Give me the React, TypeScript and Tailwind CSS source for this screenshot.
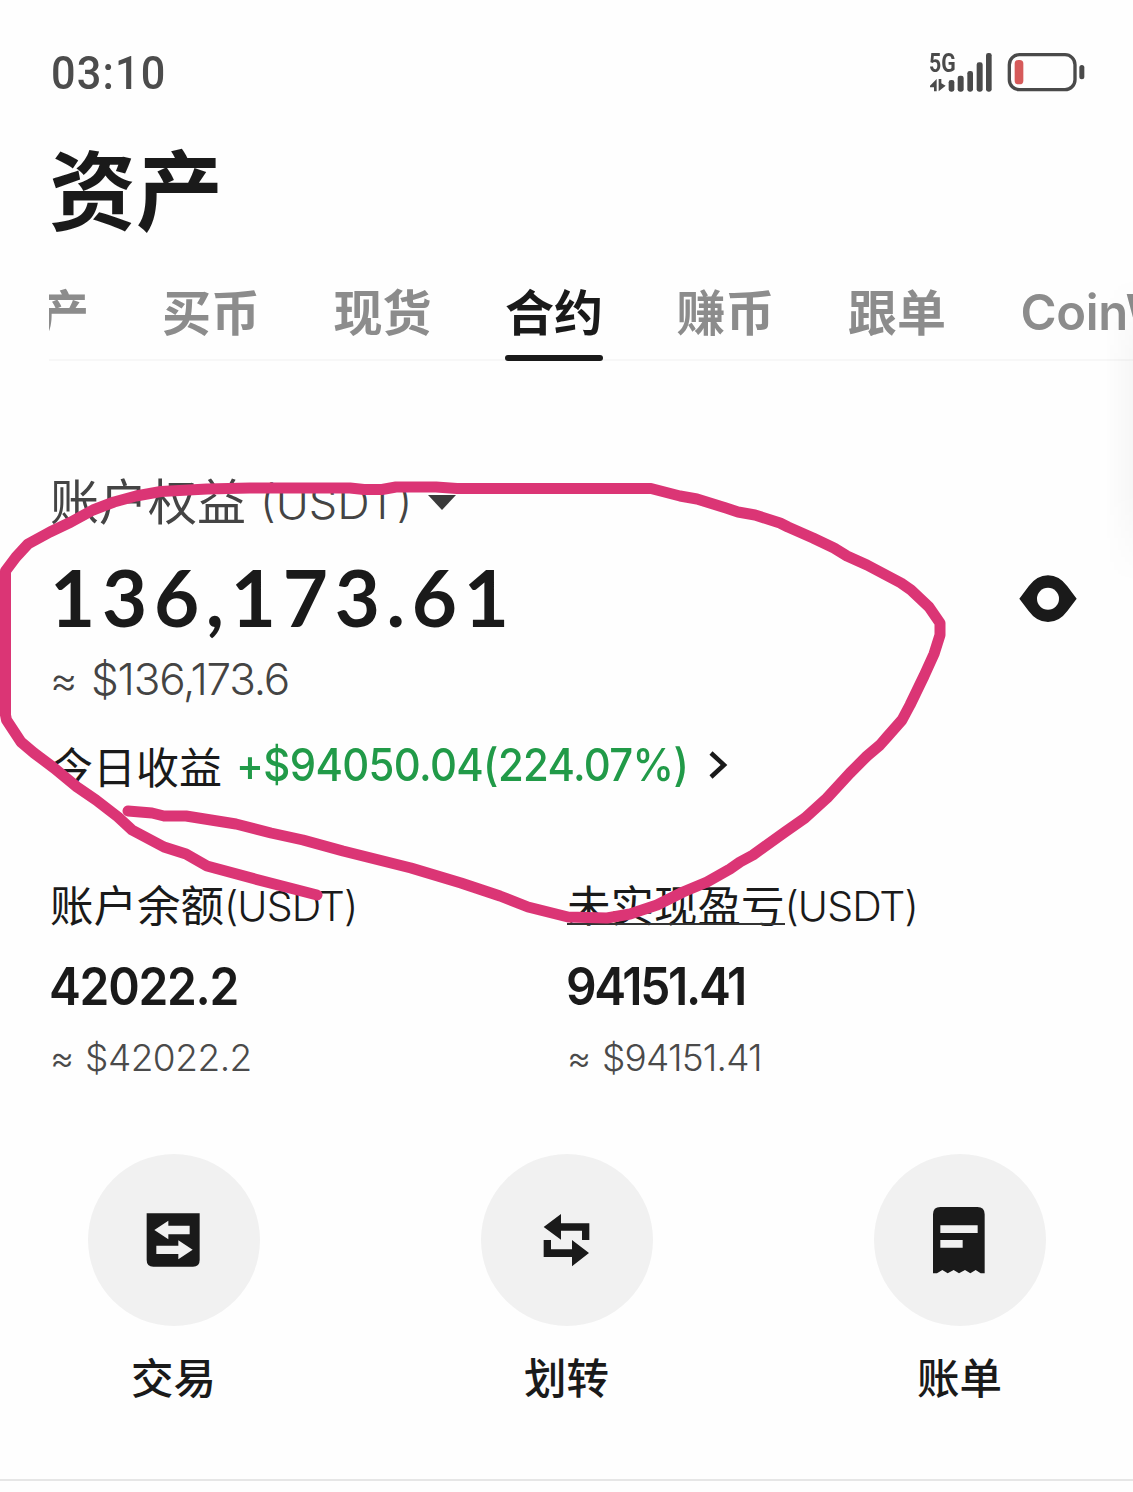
import React from 'react';

const UI = "font-['Inter','Noto_Sans_CJK_SC',sans-serif]";
const CJK = "font-['Noto_Sans_CJK_SC',sans-serif]";

const tabs = ['买币', '现货', '合约', '赚币', '跟单'];

function StatusBar() {
  return (
    <div className="flex h-[140px] items-start justify-between pl-[51px] pr-[48px] pt-[49px]">
      <span className="origin-left scale-x-[0.94] font-['Roboto',sans-serif] text-[46px] leading-[48px] font-medium tracking-[1.2px] text-[#4c4c4c]">
        03:10
      </span>
      <div className="flex items-start text-[#4a4a4a]">
        <div className="relative h-[44px] w-[64px]">
          <span className="absolute top-0 left-0 origin-left scale-x-[0.85] font-['Roboto',sans-serif] text-[25px] leading-[30px] font-bold">
            5G
          </span>
          <svg className="absolute top-0 left-0" width="64" height="44" viewBox="87 57 192 132" fill="currentColor">
            <path d="M90 167 L110 147 V184 H102 V172H90Z M116 147H124V160L137 167L116 184Z" />
            <rect x="146" y="150" width="17" height="35" rx="7" />
            <rect x="173" y="137" width="18" height="48" rx="7" />
            <rect x="202" y="123" width="17" height="62" rx="7" />
            <rect x="230" y="97" width="18" height="88" rx="7" />
            <rect x="258" y="69" width="17" height="116" rx="7" />
          </svg>
        </div>
        <svg className="ml-[14px]" width="78" height="44" viewBox="321 57 234 132">
          <rect x="328" y="74" width="197" height="105" rx="30" fill="none" stroke="#4a4a4a" strokeWidth="10" />
          <rect x="344" y="90" width="26" height="73" rx="11" fill="#d65a5a" />
          <rect x="538" y="105" width="15" height="43" rx="7.5" fill="#4a4a4a" />
        </svg>
      </div>
    </div>
  );
}

function Tabs() {
  return (
    <nav className={`${CJK} ml-[49px] flex h-[87px] overflow-hidden text-[49px] leading-[72px] font-bold whitespace-nowrap text-[#8c8c8c] shadow-[inset_0_-2px_0_#f7f7f7]`}>
      <span className="-ml-[9px] w-[122px] shrink-0">产</span>
      {tabs.map((t) => (
        <span
          key={t}
          className={
            t === '合约'
              ? 'relative mr-[73.5px] w-[98px] shrink-0 text-[#1a1a1a] after:absolute after:top-[81px] after:left-0 after:h-[6px] after:w-[98px] after:rounded-full after:bg-[#1a1a1a]'
              : 'mr-[73.5px] w-[98px] shrink-0'
          }
        >
          {t}
        </span>
      ))}
      <span className="ml-[1px] shrink-0 pt-[3px] font-['Inter',sans-serif] text-[49px] font-semibold tracking-[-0.3px]">CoinW</span>
    </nav>
  );
}

function Balance({ label, unit, value, valueClass, approx, approxClass, underlined = false }: {
  label: string; unit: string; value: string; valueClass: string; approx: string; approxClass: string; underlined?: boolean;
}) {
  return (
    <div className="w-[517px] shrink-0 text-[#1a1a1a]">
      <div className="flex h-[60px] items-center whitespace-nowrap">
        <span className={underlined
          ? `${CJK} relative -mt-[4px] text-[43.5px] leading-[60px] after:absolute after:bottom-[9px] after:left-0 after:h-[2px] after:w-full after:bg-[#333]`
          : `${CJK} -mt-[4px] text-[43.5px] leading-[60px]`}>
          {label}
        </span>
        <span className="font-['Inter',sans-serif] text-[41px] leading-[60px] font-light tracking-[-0.9px]">{unit}</span>
      </div>
      <div className={`-ml-[1px] mt-[20px] origin-left scale-x-[0.93] font-['Inter',sans-serif] text-[51.5px] leading-[60px] font-semibold ${valueClass}`}>{value}</div>
      <div className="mt-[10px] flex font-['Inter',sans-serif] text-[37px] leading-[64px] font-light text-[#4a4a4a]">
        <span className="w-[35px] text-[37px]">≈</span>
        <span className={approxClass}>{approx}</span>
      </div>
    </div>
  );
}

const actions = [
  {
    label: '交易',
    icon: (
      <svg width="172" height="172" viewBox="26 42 516 516">
        <path d="M202 220H361V360Q361 380 341 380H222Q202 380 202 360Z" fill="#1a1a1a" />
        <path d="M225 270L267 242V257H331V283H267V298Z M340 329L297 301V317H231V342H297V358Z" fill="#f1f1f1" />
      </svg>
    ),
  },
  {
    label: '划转',
    icon: (
      <svg width="172" height="172" viewBox="33 42 516 516" fill="#1a1a1a">
        <path d="M221 261L273 222V250H358V300H336V272H273V299Z" />
        <path d="M357 339L306 300V328H243V300H221V351H306V379Z" />
      </svg>
    ),
  },
  {
    label: '账单',
    icon: (
      <svg width="172" height="172" viewBox="43 42 516 516">
        <path d="M220 223Q220 201 242 201H353Q375 201 375 223V400H363L348 390L332 400L316 390L298 400L282 390L264 400L248 390L232 400H220Z" fill="#1a1a1a" />
        <path d="M242 256H354V279H242Z M242 300H309V323H242Z" fill="#f1f1f1" />
      </svg>
    ),
  },
];

const stroke =
  'M317 895L286 887L255 879L207 866L186 854L164 847L132 830L118 817L96 800L77 787L54 768L34 753L21 742L6.5 720L5.5 715V571L16 557L28 544L50 532L71 522L93 510L114 502L136 496L161 491.5L207 489L250 488H350L364 489.5H382L396 487H436L457 488.5H651L680 496L697 499L726 508L738 512L755 515L780 523L788 527L813 538L834 548L847 556L867 565L901 583L911 590L929 607L940 623V635L934 654L924 676L910 705L902 720L887 737L880 745L867 756L850 773L827 798L805 818L785 832L753 855L740 862L730 869L707 882L683 892L657 905L630 914L607 918L568 917L540 910L528 907L500 896L461 883L411 868L343 851L303 840L271 833L236 824L186 816H164L152 813L128 811';

export default function App() {
  return (
    <div className={`${UI} relative h-[1492px] w-[1133px] overflow-hidden bg-[#fefefe]`}>
      <StatusBar />
      <h1 className={`${CJK} ml-[49px] h-[134px] text-[87px] leading-[92px] font-bold text-[#1a1a1a]`}>资产</h1>
      <Tabs />

      <section className="h-[510px] pt-[112px] pl-[50px]">
        <div className="flex h-[60px] items-center whitespace-nowrap text-[#444]">
          <span className={`${CJK} -mt-[8px] text-[49px] leading-[60px]`}>账户权益</span>
          <span className="ml-[14px] font-['Inter',sans-serif] text-[45px] leading-[60px] font-light">(USDT)</span>
          <svg className="ml-[16px]" width="28" height="16" viewBox="0 0 28 16">
            <path d="M0 0H28L14 15Z" fill="#3a3a3a" />
          </svg>
        </div>
        <div className="mt-[21px] flex h-[90px] items-center justify-between pr-[56px]">
          <span className="-mt-[4px] font-['Lato',sans-serif] text-[78px] leading-[90px] font-bold tracking-[6.7px] text-[#1a1a1a]">136,173.61</span>
          <svg width="58" height="48" viewBox="57 46 174 144">
            <path d="M58 117L86 80Q110 47 144 47T202 80L230 117L202 154Q178 187 144 187T86 154Z" fill="#1a1a1a" />
            <circle cx="144" cy="117" r="33" fill="#fefefe" />
          </svg>
        </div>
        <div className="flex h-[70px] items-center font-['Inter',sans-serif] text-[44px] font-light text-[#444]">
          <span className="w-[41px] text-[42px]">≈</span>
          <span className="tracking-[-1.2px]">$136,173.6</span>
        </div>
        <div className="mt-[16px] flex h-[70px] items-center whitespace-nowrap">
          <span className={`${CJK} text-[43px] text-[#1a1a1a]`}>今日收益</span>
          <span className="ml-[14px] origin-left scale-x-[0.93] font-['Inter',sans-serif] text-[45px] font-medium tracking-[-0.7px] text-[#219a48]">+$94050.04(224.07%)</span>
          <svg className="-ml-[13px]" width="20" height="28" viewBox="0 0 20 28">
            <path d="M2 2L15 14L2 26" fill="none" stroke="#1a1a1a" strokeWidth="4.5" />
          </svg>
        </div>
      </section>

      <section className="flex h-[283px] pt-[5px] pl-[50px]">
        <Balance label="账户余额" unit="(USDT)" value="42022.2" valueClass="tracking-[-1.4px]" approx="$42022.2" approxClass="tracking-[-0.5px]" />
        <Balance label="未实现盈亏" unit="(USDT)" value="94151.41" valueClass="tracking-[-2.5px]" approx="$94151.41" approxClass="tracking-[-0.8px]" underlined />
      </section>

      <section className="flex h-[327px] justify-between border-b-2 border-[#e6e6e6] pr-[87px] pl-[88px]">
        {actions.map((a) => (
          <div key={a.label} className="flex w-[172px] flex-col items-center">
            <div className="h-[172px] w-[172px] rounded-full bg-[#f1f1f1]">{a.icon}</div>
            <span className={`${CJK} -ml-[1px] mt-[20px] text-[42.5px] leading-[60px] font-medium text-[#1a1a1a]`}>{a.label}</span>
          </div>
        ))}
      </section>

      <div className="pointer-events-none absolute top-[275px] right-0 h-[310px] w-[28px] bg-linear-to-r from-transparent to-black/3 mask-y-from-70%" />
      <svg className="pointer-events-none absolute inset-0" width="1133" height="1492" viewBox="0 0 1133 1492">
        <path d={stroke} fill="none" stroke="#db3575" strokeWidth="11" strokeLinecap="round" strokeLinejoin="round" />
      </svg>
    </div>
  );
}
